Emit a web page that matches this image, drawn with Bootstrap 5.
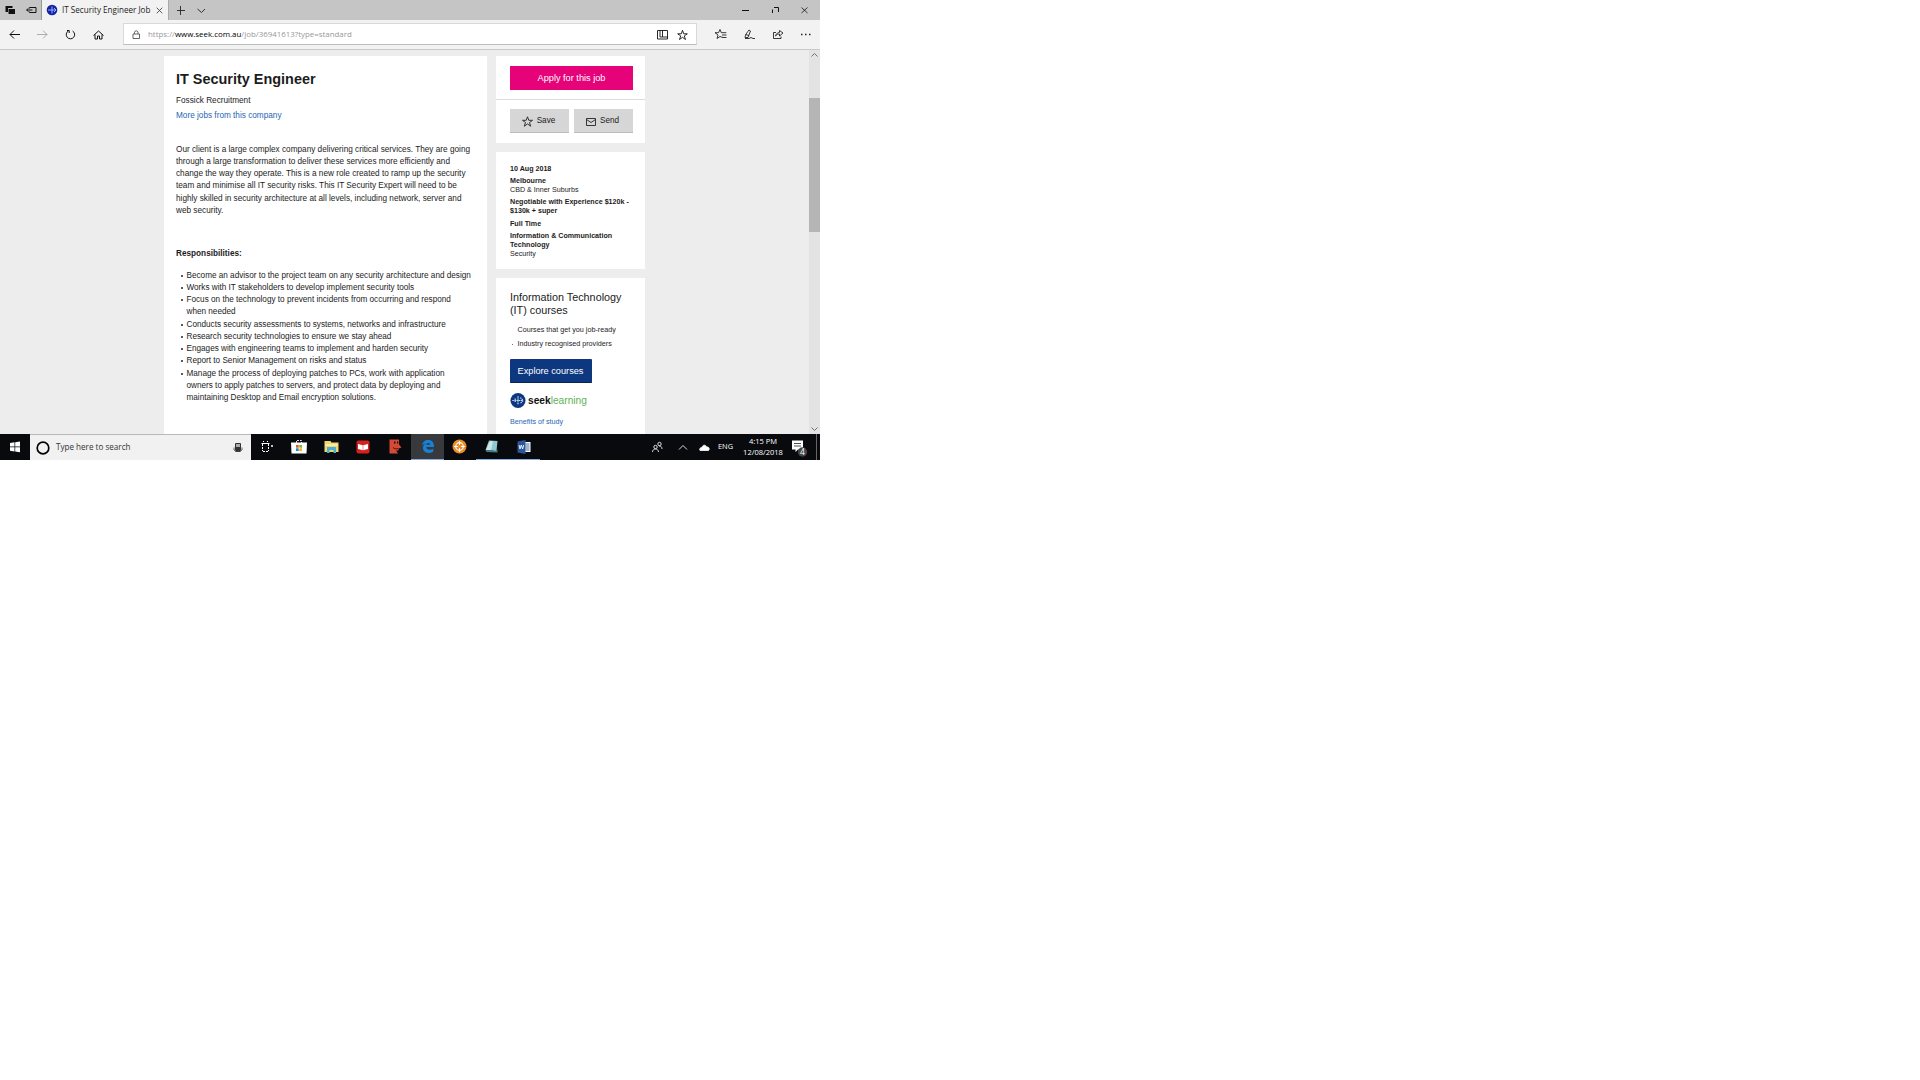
<!DOCTYPE html>
<html lang="en">
<head>
<meta charset="utf-8">
<title>IT Security Engineer Job</title>
<link href="https://cdn.jsdelivr.net/npm/bootstrap@5.3.0/dist/css/bootstrap.min.css" rel="stylesheet">
<style>
body{margin:0;background:#fff;font-family:"Liberation Sans",Arial,sans-serif;color:#1c1c1c}
svg{display:block;flex:none}
.desktop{width:820px;height:460px;overflow:hidden}
.ui{font-family:"Open Sans","Noto Sans",sans-serif}
.ln,.lines>div{white-space:nowrap}
.tabs{height:20px;background:#c5c5c5}
.tabs-left{width:42px;border-right:1px solid #999;padding-left:5px;gap:10px}
.tab{width:127px;background:#f2f2f2;padding-left:4px;border-right:1px solid #aaa}
.tab .ui{margin-left:4px;width:90px;font-size:8.1px}
.toolbar{height:30px;padding-top:1px;background:#f2f2f2;border-bottom:1px solid #cacaca}
.addr{width:574px;height:22px;margin-top:2px;padding-top:1px;background:#fff;border:1px solid #d9d9d9;border-bottom-color:#bdbdbd}
.addr .ui{font-size:7.9px;color:#999;margin-left:7px}
.addr b{font-weight:400;color:#000}
.page{height:384px;background:#ededed;overflow:hidden}
.job{width:323px;margin:6px 0 0 164px;background:#fff;padding-left:12px;font-size:8.22px}
.job h1{font-size:14.45px;line-height:18px;font-weight:700;margin:14px 0 0}
.co{line-height:12px;margin-top:7px}
.more{line-height:12px;margin-top:3.3px}
.bluelink{color:#2765b5}
.para{line-height:12.3px;margin-top:21.3px}
.resp{line-height:12px;font-weight:700;margin-top:30.3px}
.duties{font-size:8.19px;line-height:12.27px;margin-top:9.9px;padding-left:10.5px}
.duties .li,.perks .li{position:relative}
.duties .li::before{content:"";position:absolute;left:-6px;top:5px;width:2px;height:2px;border-radius:1px;background:#222}
.side{width:149px;margin:6px 0 0 9px}
.panel{background:#fff}
.cta{height:43px;padding:10px 0 0 14px}
.apply{width:123px;height:24px;padding-top:1px;background:#e60278;color:#fff;font-size:9.2px}
.acts{height:44px;padding:9px 0 0 14px;gap:5px;border-top:1px solid #dcdcdc}
.greybtn{width:59px;height:24px;padding:2px 2px 0 0;background:#d6d6d6;border-bottom:1px solid #bbb;font-size:8.2px;gap:4px}
.facts{height:117px;margin-top:9px;padding:12.7px 0 0 14px;font-size:7.13px;line-height:9.1px;font-weight:700}
.facts .sub{font-weight:400}
.facts .nxt{margin-top:3.2px}
.courses{height:170px;margin-top:9px;padding:9.5px 0 0 14px}
.courses h2{font-size:10.8px;line-height:13.5px;margin:3px 0 0;font-weight:400;white-space:nowrap}
.perks{font-size:7.2px;line-height:14.5px;margin-top:5.2px;padding-left:7.5px}
.perks .li+.li::before{content:"";position:absolute;left:-6px;top:7px;width:1px;height:1px;background:#777}
.explore{width:82px;height:24px;padding:2px 1px 0 0;background:#0d3880;border-bottom:1px solid #072352;border-radius:1px;color:#fff;font-size:9.2px;margin-top:7.8px}
.brand{margin-top:9px;gap:2px;font-size:10.2px;line-height:16px;height:17px}
.brand .sk{font-weight:700;color:#111}
.brand .lg{color:#62b257}
.benefit{font-size:7.2px;line-height:10px;margin-top:8px}
.scroll{width:11px;background:#e3e3e3}
.thumb{height:134px;margin:38px 0 192px;background:#b5b5b5}
.task{height:26px;background:#090a0e;color:#fff}
.search{width:221px;background:#f1f1f1;border-top:1px solid #b9b9b9;color:#333;padding-left:6px;font-size:8.1px}
.search .ui{margin-left:6px}
.app{width:32.1px;height:26px;border-bottom:1px solid transparent}
.on{background:#38393c}
.bar{border-bottom-color:#86aee0}
.tray{width:173px}
.clock{font-size:7.5px;line-height:11.5px;text-align:center;width:46px}
</style>
<script src="https://cdn.jsdelivr.net/npm/bootstrap@5.3.0/dist/js/bootstrap.bundle.min.js"></script>
</head>
<body>
<div class="desktop d-flex flex-column">
  <div class="tabs d-flex">
    <div class="tabs-left d-flex align-items-center">
      <svg width="11" height="10" viewBox="0 0 11 10"><path d="M.5 1h7v2H3v4H.5z" fill="#111"/><path d="M3.500 4h6.500v5H3.500z" fill="#111"/></svg>
      <svg width="11" height="10" viewBox="0 0 11 10" fill="none" stroke="#111"><path d="M3.500 3.500V2.500H10v5H3.500V6.500M.5 5h6M2.500 3.300L.7 5l1.800 1.700"/></svg>
    </div>
    <div class="tab d-flex align-items-center">
      <svg width="12" height="12" viewBox="0 0 12 12"><circle cx="6" cy="6" r="5.300" fill="#1622a4"/><path d="M2 6h8M6 2.500v7M8 4l2 2-2 2" stroke="#8fb0ff" fill="none"/></svg>
      <span class="ui ln">IT Security Engineer Job</span>
      <svg class="ms-1" width="7" height="7" viewBox="0 0 7 7" stroke="#333" stroke-width=".8"><path d="M.7.7l5.600 5.600M6.300.7L.7 6.300"/></svg>
    </div>
    <svg class="ms-2 mt-1" width="30" height="12" viewBox="0 0 30 12" fill="none" stroke="#222" stroke-width=".9"><path d="M-1 6.500h9M3.500 2v9M20.500 5l4 3.500 3.500-3.500"/></svg>
    <svg class="ms-auto" width="80" height="20" viewBox="0 0 80 20" fill="none" stroke="#111"><path d="M2 10.500h7M32.500 13V9.500M34 7.500h4.500V12"/><path d="M61.500 7.500l6 5.500M67.500 7.500l-6 5.500" stroke-width=".8"/></svg>
  </div>
  <div class="toolbar d-flex">
    <svg width="123" height="28" viewBox="0 0 123 28" fill="none" stroke="#111"><path d="M20 13.500H10M14 9.500l-4 4 4 4"/><path d="M37 13.500h10M43 9.500l4 4-4 4" stroke="#999" stroke-width=".8"/><path d="M68.300 10a4.200 4.200 0 1 0 4.300 0M67 9.500h2.200V12"/><path d="M93.500 14.500l5-4.500 5 4.500M95 13.500V18h2.500v-3h2v3h2.500v-4.500"/></svg>
    <div class="addr d-flex align-items-center">
      <svg class="ms-2" width="9" height="11" viewBox="0 0 9 11" fill="none" stroke="#555" stroke-width=".9"><path d="M1 5h6.500v4.500H1zM2.500 5V3.200a1.800 1.800 0 0 1 3.500 0V5"/></svg>
      <span class="ui ln">https://<b>www.seek.com.au</b>/job/36941613?type=standard</span>
      <svg class="ms-auto me-2" width="32" height="12" viewBox="0 0 32 12" fill="none" stroke="#111" stroke-width=".9"><path d="M1.500 1.500h10v8.500h-10zM6.500 1.500V8h5M4 1.500V8h2.500"/><path d="M26.500 1.300l1.200 3.500h3.600l-3 2.100 1.200 3.600-3-2.200-3 2.200 1.200-3.600-3-2.100h3.600z"/></svg>
    </div>
    <svg width="123" height="28" viewBox="0 0 123 28" fill="none" stroke="#222" stroke-width=".9"><path d="M26 16.500l-3-1-3 2 1-3.500-3-2.300h3.500L23 8.500l1.300 3.200h5M25 14h4.500M25.500 16.500h4"/><path d="M48 16.500c0-3 3-6 4-7.500l1.500 1-2.500 6.500h-3M48.500 13.500l3.500 1M48 17.500h4l2-1 2 1h2"/><path d="M79 11.500h-2.500v6h7.500v-2M78.500 15c1-3 2.500-3.500 4-3.500v-2l3.500 2.500-3.500 3v-2c-1.500 0-2.500.3-4 2"/><path d="M104 13.500h1.500M108 13.500h1.500M112 13.500h1.500" stroke-width="1.300"/></svg>
  </div>
  <div class="page d-flex">
    <main class="job">
      <h1 class="ln">IT Security Engineer</h1>
      <div class="co ln">Fossick Recruitment</div>
      <div class="more ln bluelink">More jobs from this company</div>
      <div class="para lines">
        <div>Our client is a large complex company delivering critical services. They are going</div>
        <div>through a large transformation to deliver these services more efficiently and</div>
        <div>change the way they operate. This is a new role created to ramp up the security</div>
        <div>team and minimise all IT security risks. This IT Security Expert will need to be</div>
        <div>highly skilled in security architecture at all levels, including network, server and</div>
        <div>web security.</div>
      </div>
      <div class="resp ln">Responsibilities:</div>
      <div class="duties lines">
        <div class="li">Become an advisor to the project team on any security architecture and design</div>
        <div class="li">Works with IT stakeholders to develop implement security tools</div>
        <div class="li">Focus on the technology to prevent incidents from occurring and respond</div>
        <div>when needed</div>
        <div class="li">Conducts security assessments to systems, networks and infrastructure</div>
        <div class="li">Research security technologies to ensure we stay ahead</div>
        <div class="li">Engages with engineering teams to implement and harden security</div>
        <div class="li">Report to Senior Management on risks and status</div>
        <div class="li">Manage the process of deploying patches to PCs, work with application</div>
        <div>owners to apply patches to servers, and protect data by deploying and</div>
        <div>maintaining Desktop and Email encryption solutions.</div>
      </div>
    </main>
    <aside class="side">
      <div class="panel">
        <div class="cta"><div class="apply d-flex align-items-center justify-content-center">Apply for this job</div></div>
        <div class="acts d-flex">
          <div class="greybtn d-flex align-items-center justify-content-center">
            <svg width="11" height="11" viewBox="0 0 11 11" fill="none" stroke="#222" stroke-width=".9"><path d="M5.500.8l1.300 3.500h3.700l-3 2.200 1.200 3.700-3.200-2.300-3.200 2.300 1.200-3.700-3-2.200h3.700z"/></svg>Save</div>
          <div class="greybtn d-flex align-items-center justify-content-center">
            <svg width="10" height="8" viewBox="0 0 10 8" fill="none" stroke="#222" stroke-width=".9"><path d="M.5.5h9v7h-9zM.5 1.500L5 4.500l4.500-3"/></svg>Send</div>
        </div>
      </div>
      <div class="panel facts lines">
        <div>10 Aug 2018</div>
        <div class="nxt">Melbourne</div>
        <div class="sub">CBD &amp; Inner Suburbs</div>
        <div class="nxt">Negotiable with Experience $120k -</div>
        <div>$130k + super</div>
        <div class="nxt">Full Time</div>
        <div class="nxt">Information &amp; Communication</div>
        <div>Technology</div>
        <div class="sub">Security</div>
      </div>
      <div class="panel courses">
        <h2>Information Technology<br>(IT) courses</h2>
        <div class="perks lines"><div class="li">Courses that get you job-ready</div><div class="li">Industry recognised providers</div></div>
        <div class="explore d-flex align-items-center justify-content-center">Explore courses</div>
        <div class="brand d-flex align-items-center">
          <svg width="16" height="17" viewBox="0 0 17 17"><circle cx="8.500" cy="8.500" r="8" fill="#0d3880"/><path d="M2.500 8.500h11M8.500 4v9M11 5.500l3 3-3 3M5.500 6.500v4" stroke="#d3e2ff" stroke-width="1.200" stroke-dasharray="1.500 .7" fill="none"/></svg>
          <div class="ln"><span class="sk">seek</span><span class="lg">learning</span></div>
        </div>
        <div class="benefit ln bluelink">Benefits of study</div>
      </div>
    </aside>
    <div class="scroll ms-auto">
      <svg width="11" height="10" viewBox="0 0 11 10" fill="none" stroke="#666" stroke-width=".9"><path d="M2.500 6.500l3-3 3 3"/></svg>
      <div class="thumb"></div>
      <svg width="11" height="10" viewBox="0 0 11 10" fill="none" stroke="#666" stroke-width=".9"><path d="M2.500 3.500l3 3 3-3"/></svg>
    </div>
  </div>
  <div class="task d-flex">
    <svg width="30" height="26" viewBox="0 0 30 26" fill="#fff"><path d="M10 9l4.500-.7v4.200H10zM15.200 8.200L20 7.500v5h-4.800zM10 13.300h4.500v4.200L10 16.800zM15.200 13.300H20v5l-4.800-.7z"/></svg>
    <div class="search d-flex align-items-center">
      <svg width="14" height="14" viewBox="0 0 14 14"><circle cx="7" cy="7" r="5.800" fill="none" stroke="#000" stroke-width="1.700"/></svg>
      <span class="ui ln">Type here to search</span>
      <svg class="ms-auto me-2" width="10" height="12" viewBox="0 0 10 12"><path d="M2.500 1.500h5v5h-5z" fill="#aaa" stroke="#333"/><path d="M2 5h6v3l-1 2H3L2 8z" fill="#333"/><path d="M1 5.500V8l2 1.500h4L9 8V5.500" fill="none" stroke="#444" stroke-width=".8"/></svg>
    </div>
    <div class="app d-flex align-items-center justify-content-center"><svg width="14" height="12" viewBox="0 0 14 12" fill="none" stroke="#fff"><path d="M1.500 2.500h8M3 .5h1M7 .5h1"/><path d="M2.500 3v7M8.500 3v7M3 10.500h6" stroke-dasharray="2 1"/><path d="M11 5h2" stroke-width="1.500"/></svg></div>
    <div class="app d-flex align-items-center justify-content-center"><svg width="16" height="15" viewBox="0 0 16 15"><path d="M5.500 4V1.500h5V4" fill="none" stroke="#ddd" stroke-dasharray="2 1"/><path d="M0 3.500h16l-.5 11H.5z" fill="#fff"/><path d="M5 6h2.700v2.700H5z" fill="#e4572e"/><path d="M8.300 6H11v2.700H8.300z" fill="#7db52b"/><path d="M5 9.300h2.700V12H5z" fill="#1b87d6"/><path d="M8.300 9.300H11V12H8.300z" fill="#f5b50f"/></svg></div>
    <div class="app d-flex align-items-center justify-content-center"><svg width="15" height="14" viewBox="0 0 15 14"><path d="M.5 1h6l1 1.500h7V12H.5z" fill="#f3d56f"/><path d="M1.500 4h12v2h-12z" fill="#ffeaa2"/><path d="M3 13V7h9v6H9.500v-3h-4v3z" fill="#48b0d5"/></svg></div>
    <div class="app d-flex align-items-center justify-content-center"><svg width="14" height="14" viewBox="0 0 14 14"><rect x=".5" y=".5" width="13" height="13" rx="2" fill="#d5211e"/><path d="M2 4l5 1.200L12 4v5l-5 1.200L2 9z" fill="#fff"/><path d="M7 5.200v5" stroke="#d66" stroke-width=".7"/></svg></div>
    <div class="app d-flex align-items-center justify-content-center"><svg width="14" height="15" viewBox="0 0 14 15"><path d="M1.500.5h9.500v5l2.500 3-3 1v2H8l2 3H1.500z" fill="#d44a34"/><path d="M6 3.500h1.500M9 3.500h1.300" stroke="#210" stroke-width="2"/><path d="M5 8.500c1.500 1.500 3 1.500 5 1" stroke="#511" fill="none"/></svg></div>
    <div class="app on bar d-flex align-items-center justify-content-center"><svg width="14" height="15" viewBox="0 0 14 15"><path d="M1 6.500C1.500 3 4 1 7.200 1c4 0 6 3 5.800 7H5.200c.2 2.800 4 3.400 7 1.700v3C7.500 15.200 2 13.600 2 9c0-2 1-3.600 2.700-4.500C3 4.800 1.800 5.500 1 6.500zM5.300 5.700h3.900C9.100 3.400 5.700 3.300 5.300 5.700z" fill="#1681d8" fill-rule="evenodd"/></svg></div>
    <div class="app d-flex align-items-center justify-content-center"><svg width="15" height="15" viewBox="0 0 15 15"><circle cx="7.500" cy="7.500" r="7" fill="#ec8d25"/><circle cx="7.500" cy="7.500" r="3.800" fill="none" stroke="#fff" stroke-width="1.200"/><path d="M7.500 2v11M2 7.500h11" stroke="#fff"/><circle cx="7.500" cy="7.500" r="1.500" fill="#ec8d25"/></svg></div>
    <div class="app bar d-flex align-items-center justify-content-center"><svg width="15" height="14" viewBox="0 0 15 14"><path d="M5 .5l8.500.5-1 10-11-1z" fill="#8fc8ce"/><path d="M6 1l3 .2-2 9-5-.4z" fill="#cbe7e6"/><path d="M1.500 10l11 1 1-2v3.500l-11-.5z" fill="#457f88"/></svg></div>
    <div class="app bar d-flex align-items-center justify-content-center"><svg width="14" height="14" viewBox="0 0 14 14"><path d="M7 2h6.500v10H7z" fill="#fff"/><path d="M8.500 4h4M8.500 6h4M8.500 8h4M8.500 10h4" stroke="#2b579a" stroke-width=".9"/><path d="M.5 1.500L8.500 0v14l-8-1.500z" fill="#2b579a"/><path d="M2 5l1 4 1.300-4 1.300 4L6.700 5" stroke="#fff" stroke-width=".9" fill="none"/></svg></div>
    <div class="tray ui d-flex align-items-center ms-auto">
      <svg width="66" height="26" viewBox="0 0 66 26" fill="none" stroke="#eee" stroke-width=".9"><circle cx="12.500" cy="10" r="1.700"/><circle cx="8.500" cy="13" r="1.700"/><path d="M5.500 18c0-4 6-4 6 0M12 12c2 0 3 1 3 3"/><path d="M32 15.500l4-4 4 4"/><path d="M53 16.500c-1-2 .5-3 2-3 .5-3 4-3 4.500-.5 2.500-.5 3.500 2 2 3.500z" fill="#fff"/></svg>
      <span class="ln" style="font-size:7.4px;margin-left:5px;width:18px">ENG</span>
      <div class="clock ln ms-1">4:15 PM<br>12/08/2018</div>
      <svg width="34" height="26" viewBox="0 0 34 26"><path d="M6 6.500h11v9h-5l-2.500 2.500v-2.500H6z" fill="#fff"/><path d="M8 9.500h7M8 12h7" stroke="#222" stroke-width=".8"/><circle cx="16.500" cy="18" r="4.700" fill="#444"/><text x="16.500" y="21" font-size="8.500" text-anchor="middle" fill="#fff">4</text><path d="M30.500 0v26" stroke="#666"/></svg>
    </div>
  </div>
</div>
</body>
</html>
